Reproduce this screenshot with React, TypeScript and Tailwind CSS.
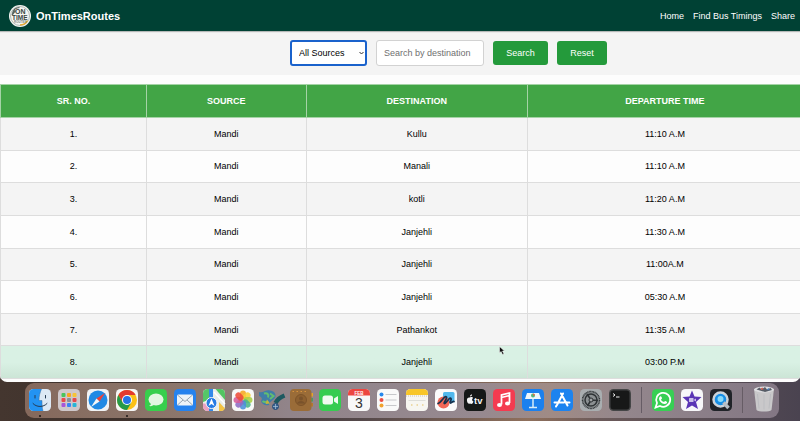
import type { ReactNode } from "react";

const routes: [string, string, string][] = [
  ["Mandi", "Kullu", "11:10 A.M"],
  ["Mandi", "Manali", "11:10 A.M"],
  ["Mandi", "kotli", "11:20 A.M"],
  ["Mandi", "Janjehli", "11:30 A.M"],
  ["Mandi", "Janjehli", "11:00A.M"],
  ["Mandi", "Janjehli", "05:30 A.M"],
  ["Mandi", "Pathankot", "11:35 A.M"],
  ["Mandi", "Janjehli", "03:00 P.M"],
];

function Logo() {
  return (
    <svg className="size-[22px]" viewBox="0 0 44 44" aria-hidden="true">
      <circle cx="22" cy="22" r="22" fill="#f4f5f2" />
      <circle cx="22" cy="22" r="19" fill="none" stroke="#9aa5a0" strokeWidth="1.5" />
      <path d="M7 17a15 15 0 0 1 14-12M6 20l7-9" fill="none" stroke="#58645f" strokeWidth="2.5" />
      <path d="M22 40c7 0 12-3 15-9" fill="none" stroke="#e8a92b" strokeWidth="3" />
      <g fontFamily="Liberation Sans, sans-serif" fontWeight="700" fill="#3a4743">
        <text x="12" y="18" fontSize="14">ON</text>
        <text x="6" y="29" fontSize="13">TIME</text>
        <text x="10" y="36" fontSize="6" fill="#7f8985">ROUTES</text>
      </g>
    </svg>
  );
}

function Tile({ fill, children }: { fill: string; children?: ReactNode }) {
  return (
    <>
      <rect width="44" height="44" rx="9" fill={fill} />
      {children}
    </>
  );
}

const petals = ["#f5a623", "#f7d038", "#a9cf46", "#4bb58a", "#4a90d9", "#8d6cc5", "#d55c9a", "#ee4b3a"];
const launchColors = ["#49c45c", "#f5a623", "#f6c437", "#e84a4a", "#8b8f96", "#e5484d", "#a855d8", "#3b82f6", "#28b5d6"];

const apps: { name: string; running?: boolean; art: ReactNode }[] = [
  {
    name: "Finder",
    running: true,
    art: (
      <Tile fill="#dde9f5">
        <path d="M9 0h16c-3 7-5 14-5 23h6c0 8 0 14 2 21H9a9 9 0 0 1-9-9V9a9 9 0 0 1 9-9z" fill="#2393f2" />
        <path d="M25 0c-3 7-5 14-5 23h6c0 8 0 14 2 21" fill="none" stroke="#3d6c9c" strokeWidth="1" />
        <path d="M12 13v5M33 13v5M8 29c7 8 21 8 28 0" fill="none" stroke="#263b52" strokeWidth="2" strokeLinecap="round" />
      </Tile>
    ),
  },
  {
    name: "Launchpad",
    art: (
      <Tile fill="#cfc8cb">
        {launchColors.map((c, i) => (
          <rect key={i} x={7 + (i % 3) * 11} y={8 + Math.floor(i / 3) * 10} width="8" height="8" rx="2" fill={c} />
        ))}
      </Tile>
    ),
  },
  {
    name: "Safari",
    art: (
      <Tile fill="#f0f2f4">
        <circle cx="22" cy="22" r="19" fill="#2089e4" />
        <path d="M36 8 25 25l-6-6z" fill="#ee4038" />
        <path d="M8 36l11-17 6 6z" fill="#f6f6f6" />
      </Tile>
    ),
  },
  {
    name: "Chrome",
    running: true,
    art: (
      <Tile fill="#f5f5f5">
        <circle cx="22" cy="22" r="20" fill="#fbc116" />
        <path d="M22 12h17.3A20 20 0 0 0 4.700 12l8.600 15z" fill="#e33b2e" />
        <path d="M30.700 27 22 42A20 20 0 0 1 4.700 12l8.600 15z" fill="#269a48" />
        <circle cx="22" cy="22" r="10" fill="#fff" />
        <circle cx="22" cy="22" r="8" fill="#2674e6" />
      </Tile>
    ),
  },
  {
    name: "Messages",
    art: (
      <Tile fill="#37cf4c">
        <ellipse cx="22" cy="21" rx="15" ry="12" fill="#e3f6e1" />
        <path d="M12 28c0 4-2 5-4 6 5 1 9-1 11-3z" fill="#e3f6e1" />
      </Tile>
    ),
  },
  {
    name: "Mail",
    art: (
      <Tile fill="#2582ee">
        <rect x="6" y="11" width="32" height="22" rx="3" fill="#edf3f8" />
        <path d="M7 12l15 13 15-13M7 32l11-10M37 32 26 22" fill="none" stroke="#8796a4" strokeWidth="1.7" />
      </Tile>
    ),
  },
  {
    name: "Maps",
    art: (
      <Tile fill="#e9eeea">
        <path d="M9 0h9v19L0 26V9a9 9 0 0 1 9-9z" fill="#55c768" />
        <path d="M25 0h10a9 9 0 0 1 9 9v13z" fill="#52c562" />
        <path d="M0 29h13v15H9a9 9 0 0 1-9-9z" fill="#eaa1c2" />
        <path d="M32 26l12 13a9 9 0 0 1-9 5h-3z" fill="#f4c344" />
        <path d="M12 0h8v44h-8z" fill="#3389e9" />
        <path d="M22 6l22 24" stroke="#fff" strokeWidth="3" />
        <circle cx="17" cy="28" r="11" fill="#247be3" stroke="#f8f8f8" strokeWidth="2" />
        <path d="M17 19l6 15-6-4-6 4z" fill="#fff" />
      </Tile>
    ),
  },
  {
    name: "Photos",
    art: (
      <Tile fill="#f8f8f7">
        {petals.map((c, i) => (
          <rect key={c} x="16" y="3" width="12" height="18" rx="6" fill={c} fillOpacity="0.88" transform={`rotate(${i * 45} 22 22)`} />
        ))}
      </Tile>
    ),
  },
  {
    name: "Python tools",
    art: (
      <>
        <path d="M-4 6c7 3 13-5 22-3 8 1 12 6 11 12-2 8-11 7-13 17-8 2-15-2-16-8 3-4 2-8-4-10z" fill="#407da8" />
        <path d="M6 9c7-2 10 2 8 8M18 9l7 5-7 6M3 24c4 4 7 0 12 3" fill="none" stroke="#62bd70" strokeWidth="4" />
        <path d="M9 30l3-9 6 8z" fill="#c7b33a" />
        <path d="M29 28c4-8 8-11 18-15" fill="none" stroke="#1d5960" strokeWidth="9" />
        <circle cx="29" cy="35" r="6" fill="#3c618f" stroke="#29517d" strokeWidth="2" />
        <path d="M29 30v10M24 35h10" stroke="#a3bfd4" strokeWidth="1.5" />
      </>
    ),
  },
  {
    name: "Contacts",
    art: (
      <>
        <path d="M40 8h6v7h-6z" fill="#e5a52b" />
        <path d="M40 18h6v7h-6z" fill="#4a9a63" />
        <path d="M40 28h6v7h-6z" fill="#b77a2b" />
        <rect width="43" height="44" rx="8" fill="#9a6c38" />
        <path d="M5 5h31" stroke="#d6923b" strokeWidth="2" strokeDasharray="3 5" />
        <circle cx="22" cy="22" r="11" fill="#8d6030" stroke="#7d5429" strokeWidth="2" />
        <circle cx="22" cy="19" r="4" fill="#79522b" />
        <path d="M14 29c2-7 14-7 16 0z" fill="#79522b" />
      </>
    ),
  },
  {
    name: "FaceTime",
    art: (
      <Tile fill="#35cc50">
        <rect x="7" y="13" width="21" height="18" rx="5" fill="#effaf0" />
        <path d="M30 19l8-5v16l-8-5z" fill="#effaf0" />
      </Tile>
    ),
  },
  {
    name: "Calendar",
    art: (
      <Tile fill="#f8f8f8">
        <path d="M0 13V9a9 9 0 0 1 9-9h26a9 9 0 0 1 9 9v4z" fill="#ed4640" />
        <text x="22" y="11" textAnchor="middle" fontFamily="Liberation Sans, sans-serif" fontSize="9" fontWeight="700" fill="#fff">FEB</text>
        <text x="22" y="37" textAnchor="middle" fontFamily="Liberation Sans, sans-serif" fontSize="28" fill="#333">3</text>
      </Tile>
    ),
  },
  {
    name: "Reminders",
    art: (
      <Tile fill="#f9f9f9">
        <path d="M17 11h22M17 22h22M17 33h22" stroke="#c7c8cb" strokeWidth="2" />
        <circle cx="9" cy="11" r="4" fill="#2687eb" />
        <circle cx="9" cy="22" r="4" fill="#ec4c43" />
        <circle cx="9" cy="33" r="4" fill="#f0a12e" />
      </Tile>
    ),
  },
  {
    name: "Notes",
    art: (
      <Tile fill="#f7f6f1">
        <path d="M0 12V9a9 9 0 0 1 9-9h26a9 9 0 0 1 9 9v3z" fill="#f8c629" />
        <path d="M0 14h44" stroke="#b9b3a2" strokeWidth="1.5" strokeDasharray="2 2" />
        <path d="M5 23h34" stroke="#d6d5d0" strokeWidth="1.5" />
        <path d="M10 32h27" stroke="#e3bf63" strokeWidth="2" strokeDasharray="3 8" />
      </Tile>
    ),
  },
  {
    name: "Freeform",
    art: (
      <Tile fill="#fbfbfb">
        <rect x="16" y="6" width="23" height="21" rx="3" fill="#52b9ed" />
        <circle cx="17" cy="27" r="12" fill="#f16757" />
        <path d="M6 29c7-2 13-17 17-13 2 3-7 12-4 13s10-14 13-10c2 3-4 8-1 9 3 0 4-4 7-3" fill="none" stroke="#17324e" strokeWidth="3.5" strokeLinecap="round" />
      </Tile>
    ),
  },
  {
    name: "TV",
    art: (
      <Tile fill="#151817">
        <path d="M12 17c3-2 6 0 6 1-3 2-2 6 1 7-2 6-5 5-7 4-3 1-5 0-6-5-1-6 3-8 6-7zM12 15c0-3 2-4 4-4 0 2-1 4-4 4z" fill="#f5f5f5" />
        <text x="20" y="29" fontFamily="Liberation Sans, sans-serif" fontSize="19" fontWeight="700" fill="#f5f5f5">tv</text>
      </Tile>
    ),
  },
  {
    name: "Music",
    art: (
      <Tile fill="#f43b50">
        <path d="M17 31V12l16-4v20M17 17l16-4" fill="none" stroke="#fff" strokeWidth="3.5" />
        <ellipse cx="13" cy="32" rx="5" ry="4" fill="#fff" />
        <ellipse cx="29" cy="29" rx="5" ry="4" fill="#fff" />
      </Tile>
    ),
  },
  {
    name: "Keynote",
    art: (
      <Tile fill="#1b80ee">
        <path d="M10 8h24l4 12H6z" fill="#eef6fb" />
        <path d="M22 20v16M14 37h16" stroke="#d7ebf8" strokeWidth="3" />
        <circle cx="22" cy="13" r="4" fill="#54b879" />
        <path d="M22 13V9a4 4 0 0 1 4 4z" fill="#ec6548" />
      </Tile>
    ),
  },
  {
    name: "App Store",
    art: (
      <Tile fill="#1c83ef">
        <path d="M24 9 12 32M20 9l13 24M7 27h19M31 27h6M10 35l1-2" stroke="#fff" strokeWidth="4" strokeLinecap="round" />
      </Tile>
    ),
  },
  {
    name: "Settings",
    art: (
      <Tile fill="#a9aeb0">
        <circle cx="22" cy="22" r="17" fill="#8b9092" stroke="#34393b" strokeWidth="3" strokeDasharray="2 1" />
        <circle cx="22" cy="22" r="12" fill="none" stroke="#2e3335" strokeWidth="3" />
        <path d="M22 22l14 1M22 22 14 10M22 22l-7 12" stroke="#2e3335" strokeWidth="3" />
        <circle cx="22" cy="22" r="4" fill="#9da1a3" stroke="#2e3335" strokeWidth="2" />
      </Tile>
    ),
  },
  {
    name: "Terminal",
    art: (
      <Tile fill="#444546">
        <rect x="3" y="3" width="38" height="38" rx="6" fill="#171818" />
        <path d="M8 9l4 3-4 3M14 16h7" fill="none" stroke="#eee" strokeWidth="2" />
      </Tile>
    ),
  },
];

const recentApps: { name: string; art: ReactNode }[] = [
  {
    name: "WhatsApp",
    art: (
      <Tile fill="#37cf54">
        <path d="M7 37l3-9a14 14 0 1 1 6 6z" fill="none" stroke="#fff" strokeWidth="3.5" />
        <path d="M16 15c2-2 4 2 4 4l-2 2c1 3 3 4 6 5l2-2c3 0 5 3 4 4-7 7-21-6-14-13z" fill="#fff" />
      </Tile>
    ),
  },
  {
    name: "iMovie",
    art: (
      <Tile fill="#f7f7f9">
        <path d="M22 3l5 12 14 1-11 10 4 14-12-7-12 7 4-14L3 16l14-1z" fill="#5a35b5" />
        <rect x="16" y="18" width="9" height="8" rx="1" fill="#cabfea" />
        <path d="M25 22l5-3v6z" fill="#cabfea" />
      </Tile>
    ),
  },
  {
    name: "QuickTime Player",
    art: (
      <Tile fill="#202328">
        <circle cx="21" cy="21" r="14" fill="#168ee5" stroke="#cad3da" strokeWidth="5" />
        <circle cx="21" cy="20" r="6" fill="#85d9fa" />
        <path d="M27 27l10 11" stroke="#b6bec6" strokeWidth="7" />
      </Tile>
    ),
  },
];

function DockItem({ name, running, children }: { name: string; running?: boolean; children: ReactNode }) {
  return (
    <li className="relative size-[22px] shrink-0">
      <svg className="size-[22px] overflow-visible" viewBox="0 0 44 44" role="img" aria-label={name}>
        {children}
      </svg>
      {running && <span className="absolute -bottom-1.5 left-2.5 size-0.5 rounded-full bg-[#1d1715]" />}
    </li>
  );
}

function DockDivider() {
  return <li aria-hidden="true" className="mx-[3px] h-[26px] w-px shrink-0 bg-[#665c65]" />;
}

function Dock() {
  return (
    <footer className="flex justify-center pt-px pb-[3px] pl-[3px]">
      <ul className="flex h-[35px] items-center gap-[7px] rounded-[9px] bg-[linear-gradient(to_right,#85695c,#8c776d_22%,#91848a_35%,#968990_60%,#a08b85_70%,#93868c_80%,#837784)] px-1 pb-0.5">
        {apps.map((app) => (
          <DockItem key={app.name} name={app.name} running={app.running}>{app.art}</DockItem>
        ))}
        <DockDivider />
        {recentApps.map((app) => (
          <DockItem key={app.name} name={app.name}>{app.art}</DockItem>
        ))}
        <DockDivider />
        <DockItem name="Trash">
          <path d="M2 0h40l-5 42c-4 4-26 4-30 0z" fill="#cccccd" fillOpacity="0.95" />
          <path d="M9 10l3 29M22 11v30M35 10l-3 29" stroke="#bcbdc1" strokeWidth="2" />
          <ellipse cx="22" cy="1" rx="20" ry="6" fill="#dedee1" />
          <path d="M7 1l6-4 4 4 7-5 4 5 7-3 3 4-14 4z" fill="#575c66" />
          <path d="M14 0l5-3 2 5z" fill="#cf5446" />
          <path d="M27 1l5-3 1 5z" fill="#4a80ba" />
        </DockItem>
      </ul>
    </footer>
  );
}

export default function App() {
  const cell = "border border-[#dddddd] p-0 text-center";
  const heading = "border border-[#a5d3a6] p-0 text-center font-bold";
  return (
    <div className="min-h-screen overflow-hidden bg-[linear-gradient(to_right,#44362f,#3b2f2b_25%,#54484a_45%,#8f705c_66%,#6b5a5a_75%,#4a4350)] font-['Liberation_Sans',Arial,sans-serif] text-[9px] leading-3 text-black">
      <div className="relative overflow-hidden rounded-b-[7px] bg-[#fdfdfd] pb-[3px]">
        <header className="relative flex h-[31px] items-center justify-between bg-[#004134] pr-[5px] pl-[9px] text-white shadow-[0_1px_1px_#b5b8b7]">
          <a href="#home" className="flex items-center gap-[5px] text-[11px] font-bold">
            <Logo />
            OnTimesRoutes
          </a>
          <nav className="flex gap-[9px]">
            <a href="#home">Home</a>
            <a href="#timings">Find Bus Timings</a>
            <a href="#share">Share</a>
          </nav>
        </header>

        <form className="flex h-[44px] items-center justify-center gap-[9px] bg-[#f4f4f4] pl-[97px]" onSubmit={(e) => e.preventDefault()}>
          <div className="relative">
            <select aria-label="Source" className="h-[26px] w-[77px] appearance-none rounded-[3px] border-2 border-[#1a62cc] bg-white pl-[7px] outline-none">
              <option>All Sources</option>
              <option>Mandi</option>
            </select>
            <svg className="pointer-events-none absolute top-[11px] right-[3px] h-1 w-[5px]" viewBox="0 0 10 8" aria-hidden="true">
              <path d="M1 2l4 4 4-4" fill="none" stroke="#333" strokeWidth="2" />
            </svg>
          </div>
          <input
            type="text"
            aria-label="Destination"
            placeholder="Search by destination"
            className="h-[26px] w-[108px] rounded-[3px] border border-[#d2d2d2] bg-white px-[7px] placeholder:text-[#6f6f6f]"
          />
          <button type="submit" className="h-[24px] w-[55px] rounded-[3px] bg-[#249a3b] text-white">Search</button>
          <button type="reset" className="h-[24px] w-[50px] rounded-[3px] bg-[#249a3b] text-white">Reset</button>
        </form>

        <table className="mt-[9px] h-[295px] w-[calc(100%+3px)] table-fixed border-collapse">
          <colgroup>
            <col className="w-[18.2%]" />
            <col className="w-[19.9%]" />
            <col className="w-[27.6%]" />
            <col />
          </colgroup>
          <thead>
            <tr className="h-[33px] bg-[#42a546] text-white">
              <th scope="col" className={heading}>SR. NO.</th>
              <th scope="col" className={heading}>SOURCE</th>
              <th scope="col" className={heading}>DESTINATION</th>
              <th scope="col" className={heading}>DEPARTURE TIME</th>
            </tr>
          </thead>
          <tbody>
            {routes.map(([source, destination, time], i) => (
              <tr key={i} className="odd:bg-[#f4f4f4] even:bg-[#fdfdfd] last:bg-linear-to-b last:from-[#d9f1e4] last:from-50% last:to-[#cbe4d5]">
                <td className={cell}>{i + 1}.</td>
                <td className={cell}>{source}</td>
                <td className={cell}>{destination}</td>
                <td className={cell}>{time}</td>
              </tr>
            ))}
          </tbody>
        </table>

        <svg className="pointer-events-none absolute top-[346px] left-[499px] h-[9px] w-[6px]" viewBox="0 0 12 18" aria-hidden="true">
          <path d="M1 1v13l3-3 3 6 3-1-3-6h4z" fill="#111" stroke="#fff" strokeWidth="1" />
        </svg>
      </div>
      <Dock />
    </div>
  );
}
